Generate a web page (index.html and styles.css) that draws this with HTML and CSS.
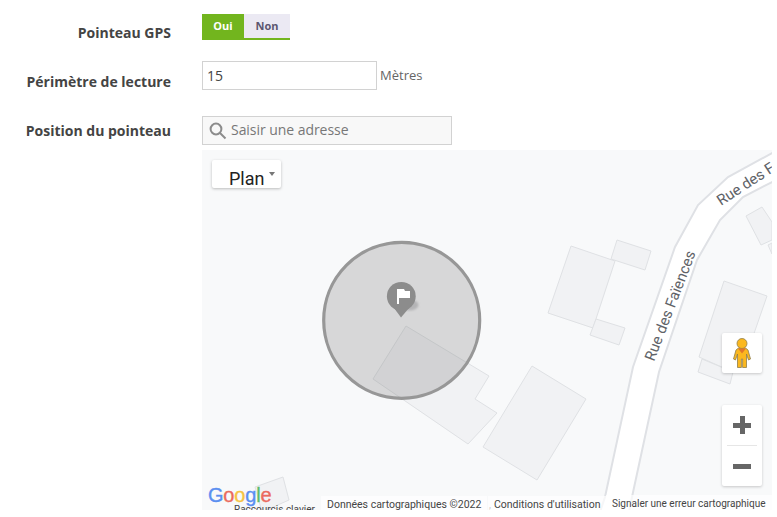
FILE: index.html
```html
<!DOCTYPE html>
<html lang="fr">
<head>
    <meta charset="UTF-8">
    <meta name="viewport" content="width=device-width, initial-scale=1.0">
    <title>Pointeau GPS</title>
    <link rel="stylesheet" href="styles.css">
</head>
<body>
    <div class="form">
        <div class="row row-toggle">
            <label class="row-label">Pointeau GPS</label>
            <div class="toggle">
                <span class="toggle-on">Oui</span>
                <span class="toggle-off">Non</span>
            </div>
        </div>

        <div class="row row-range">
            <label class="row-label">Périmètre de lecture</label>
            <input class="text-input range-input" type="text" value="15">
            <span class="unit">Mètres</span>
        </div>

        <div class="row row-search">
            <label class="row-label">Position du pointeau</label>
            <div class="search-box">
                <svg class="search-icon" viewBox="0 0 18 18">
                    <circle cx="7" cy="7" r="5.4"></circle>
                    <line x1="11" y1="11" x2="16.5" y2="16.5"></line>
                </svg>
                <span class="search-text">Saisir une adresse</span>
            </div>
        </div>

        <div class="map">
            <svg class="map-canvas" viewBox="202 150 570 360">
                <defs>
                    <filter id="soft"><feGaussianBlur stdDeviation="1"></feGaussianBlur></filter>
                </defs>
                <!-- batiments -->
                <polygon class="building" points="571,246 615,261 593,328 548,313"></polygon>
                <polygon class="building" points="617,240 651,251 645,270 611,259"></polygon>
                <polygon class="building" points="596,319 625,328 619,345 590,335"></polygon>
                <polygon class="building" points="532,366 586,399 537,480 483,447"></polygon>
                <polygon class="building" points="406,326 489,376 475,399 497,413 468,444 373,379"></polygon>
                <polygon class="building" points="724,281 767,296 750,345 733,372 699,357"></polygon>
                <polygon class="building" points="702,359 733,372 730,384 698,372"></polygon>
                <polygon class="building" points="762,207 746,216 761,245 772,240 772,222"></polygon>
                <polygon class="building" points="768,245 772,243 772,254"></polygon>
                <polygon class="building" points="255,487 283,477 289,500 262,512"></polygon>

                <!-- route -->
                <polygon class="road" points="605,497 600,512 629,512 632,497 659,372 697,260 720,220 743,197 774,181 774,152 728,177 698,205 675,247 633,367"></polygon>
                <text class="road-name" transform="translate(654,362) rotate(-69)">Rue des Faïences</text>
                <text class="road-name" transform="translate(721,206) rotate(-33)">Rue des Faïences</text>

                <!-- perimetre et pointeau -->
                <circle class="range-circle" cx="401.7" cy="320.3" r="78"></circle>
                <ellipse class="pin-shadow" cx="409" cy="305" rx="9.5" ry="5.5" filter="url(#soft)"></ellipse>
                <circle class="pin" cx="401.3" cy="296.3" r="14.4"></circle>
                <polygon class="pin" points="394,308 409,308 401,317.5"></polygon>
                <polygon class="pin-flag" points="397,289 404,289 405,291 410,291 410,298 399,298 399,304 397,304"></polygon>
            </svg>

            <div class="map-type">
                <span>Plan</span>
                <i class="caret"></i>
            </div>

            <div class="map-controls">
                <div class="control-box pegman-box">
                    <svg class="pegman" viewBox="0 0 18 30">
                        <path class="pegman-body" d="M5.5 10 L12.5 10 L15 12 L17.5 21 L15.5 22 L13.5 16 L13.5 29.5 L9.6 29.5 L9.6 21 L8.4 21 L8.4 29.5 L4.5 29.5 L4.5 16 L2.5 22 L0.5 21 L3 12 Z"></path>
                        <circle class="pegman-body" cx="9" cy="5.5" r="5"></circle>
                        <polygon class="pegman-scarf" points="5,10.5 13,10.5 9,15.5"></polygon>
                    </svg>
                </div>
                <div class="control-box zoom-box">
                    <button class="zoom-btn"><i class="bar"></i><i class="bar bar-v"></i></button>
                    <div class="zoom-sep"></div>
                    <button class="zoom-btn"><i class="bar"></i></button>
                </div>
            </div>

            <span class="google-logo"><b class="g-blue">G</b><b class="g-red">o</b><b class="g-yellow">o</b><b class="g-blue">g</b><b class="g-green">l</b><b class="g-red">e</b></span>

            <div class="map-footer">
                <span class="shortcuts">Raccourcis clavier</span>
                <span class="attrib data">Données cartographiques ©2022</span>
                <span class="comma">,</span>
                <span class="attrib terms">Conditions d'utilisation</span>
                <span class="attrib report">Signaler une erreur cartographique</span>
            </div>
        </div>
    </div>
</body>
</html>
```

FILE: styles.css
```css
* {
    margin: 0;
    padding: 0;
    box-sizing: border-box;
}

body {
    background-color: #fff;
    font-family: 'Open Sans', sans-serif;
    font-size: 14px;
    color: #444;
    overflow: hidden;
}

.form {
    padding-top: 14px;
    width: 772px;
}

/* Rows */
.row {
    display: flex;
    align-items: flex-start;
}

.row-toggle {
    height: 47px;
}

.row-range {
    height: 55px;
}

.row-search {
    height: 34px;
}

.row-label {
    width: 171px;
    margin-right: 31px;
    line-height: 20px;
    font-weight: 700;
    text-align: right;
    color: #444;
}

.row-toggle .row-label {
    padding-top: 9px;
}

.row-range .row-label {
    padding-top: 11px;
}

.row-search .row-label {
    padding-top: 5px;
}

/* Oui / Non */
.toggle {
    display: flex;
    width: 88px;
    height: 26px;
    border-bottom: 2px solid #72b51e;
    font-size: 11px;
    font-weight: 700;
    line-height: 24px;
    text-align: center;
}

.toggle-on {
    width: 42px;
    background-color: #72b51e;
    color: #fff;
}

.toggle-off {
    width: 46px;
    background-color: #ebe9f3;
    color: #5c5670;
}

/* Inputs */
.text-input {
    height: 29px;
    border: 1.5px solid #d2d2d2;
    padding: 0 4px;
    font-family: 'Open Sans', sans-serif;
    font-size: 14px;
    color: #444;
    outline: none;
}

.range-input {
    width: 175px;
}

.unit {
    margin-left: 3px;
    line-height: 29px;
    font-size: 13px;
    color: #666;
}

.search-box {
    display: flex;
    align-items: center;
    gap: 4px;
    width: 250px;
    height: 29px;
    padding-left: 6px;
    border: 1.5px solid #d2d2d2;
    background-color: #f8f8f8;
    color: #777;
}

.search-text {
    margin-top: -2px;
    letter-spacing: -0.05px;
}

.search-icon {
    width: 18px;
    height: 18px;
    fill: none;
    stroke: #8c8c8c;
    stroke-width: 2;
}

/* Map */
.map {
    position: relative;
    margin-left: 202px;
    width: 570px;
    height: 360px;
    overflow: hidden;
    background-color: #f8f9fa;
}

.map-canvas {
    display: block;
    width: 570px;
    height: 360px;
}

.building {
    fill: #f1f2f4;
    stroke: #dfe1e4;
    stroke-width: 1;
}

.road {
    fill: #fff;
    stroke: #dfe1e5;
    stroke-width: 2;
}

.road-name {
    font-family: Roboto, sans-serif;
    font-size: 15px;
    fill: #5f6368;
}

.range-circle {
    fill: #808080;
    fill-opacity: 0.28;
    stroke: #979797;
    stroke-width: 3.2;
}

.pin {
    fill: #8c8c8c;
}

.pin-shadow {
    fill: #b4b4b6;
}

.pin-flag {
    fill: #fff;
}

.map-type {
    position: absolute;
    top: 10px;
    left: 10px;
    width: 69px;
    height: 28px;
    padding-left: 17px;
    background-color: #fff;
    border-radius: 2px;
    box-shadow: 0 1px 3px rgba(0, 0, 0, 0.25);
    font-family: Roboto, sans-serif;
    font-size: 18px;
    line-height: 38px;
    color: #222;
    overflow: hidden;
}

.caret {
    position: absolute;
    top: 12px;
    left: 57px;
    border-left: 3.5px solid transparent;
    border-right: 3.5px solid transparent;
    border-top: 4px solid #777;
}

.map-controls {
    position: absolute;
    top: 183px;
    left: 520px;
    display: flex;
    flex-direction: column;
    gap: 32px;
}

.control-box {
    width: 40px;
    background-color: #fff;
    border-radius: 2px;
    box-shadow: 0 1px 3px rgba(0, 0, 0, 0.2);
}

.pegman-box {
    display: flex;
    justify-content: center;
    align-items: center;
    height: 40px;
}

.pegman {
    width: 18px;
    height: 30px;
}

.pegman-body {
    fill: #fbb81f;
    stroke: #8f7d4a;
    stroke-width: 0.8;
}

.pegman-scarf {
    fill: #e2762a;
}

.zoom-box {
    height: 81px;
}

.zoom-btn {
    position: relative;
    display: block;
    width: 40px;
    height: 40px;
    border: none;
    background: none;
}

.bar {
    position: absolute;
    top: 18px;
    left: 11px;
    width: 18px;
    height: 5px;
    background-color: #666;
}

.bar-v {
    top: 11px;
    left: 18px;
    width: 5px;
    height: 18px;
}

.zoom-sep {
    height: 1px;
    margin: 0 5px;
    background-color: #e6e6e6;
}

.google-logo {
    position: absolute;
    left: 6px;
    top: 332px;
    font-family: 'Liberation Sans', sans-serif;
    font-size: 20px;
    line-height: 26px;
    letter-spacing: -0.2px;
    text-shadow: 0 0 2px #fff;
}

.google-logo b {
    font-weight: 400;
    -webkit-text-stroke: 0.4px currentColor;
}

.g-blue {
    color: #5b8ff0;
}

.g-red {
    color: #ea6a5e;
}

.g-yellow {
    color: #f6c344;
}

.g-green {
    color: #5dbb6c;
}

.map-footer {
    position: absolute;
    left: 0;
    right: 0;
    bottom: 0;
    height: 14px;
    font-family: Roboto, sans-serif;
    font-size: 10px;
    line-height: 14px;
    color: #444;
}

.map-footer span {
    position: absolute;
    white-space: nowrap;
}

.attrib {
    top: 0;
    padding: 2px 6px 0;
    background-color: rgba(255, 255, 255, 0.7);
}

.data,
.terms {
    font-size: 10.5px;
}

.data {
    left: 119px;
}

.comma {
    left: 287px;
    top: 2px;
}

.terms {
    left: 286px;
}

.map-footer .report {
    left: 404px;
    top: -1px;
}

.shortcuts {
    left: 32px;
    top: 7px;
}
```
